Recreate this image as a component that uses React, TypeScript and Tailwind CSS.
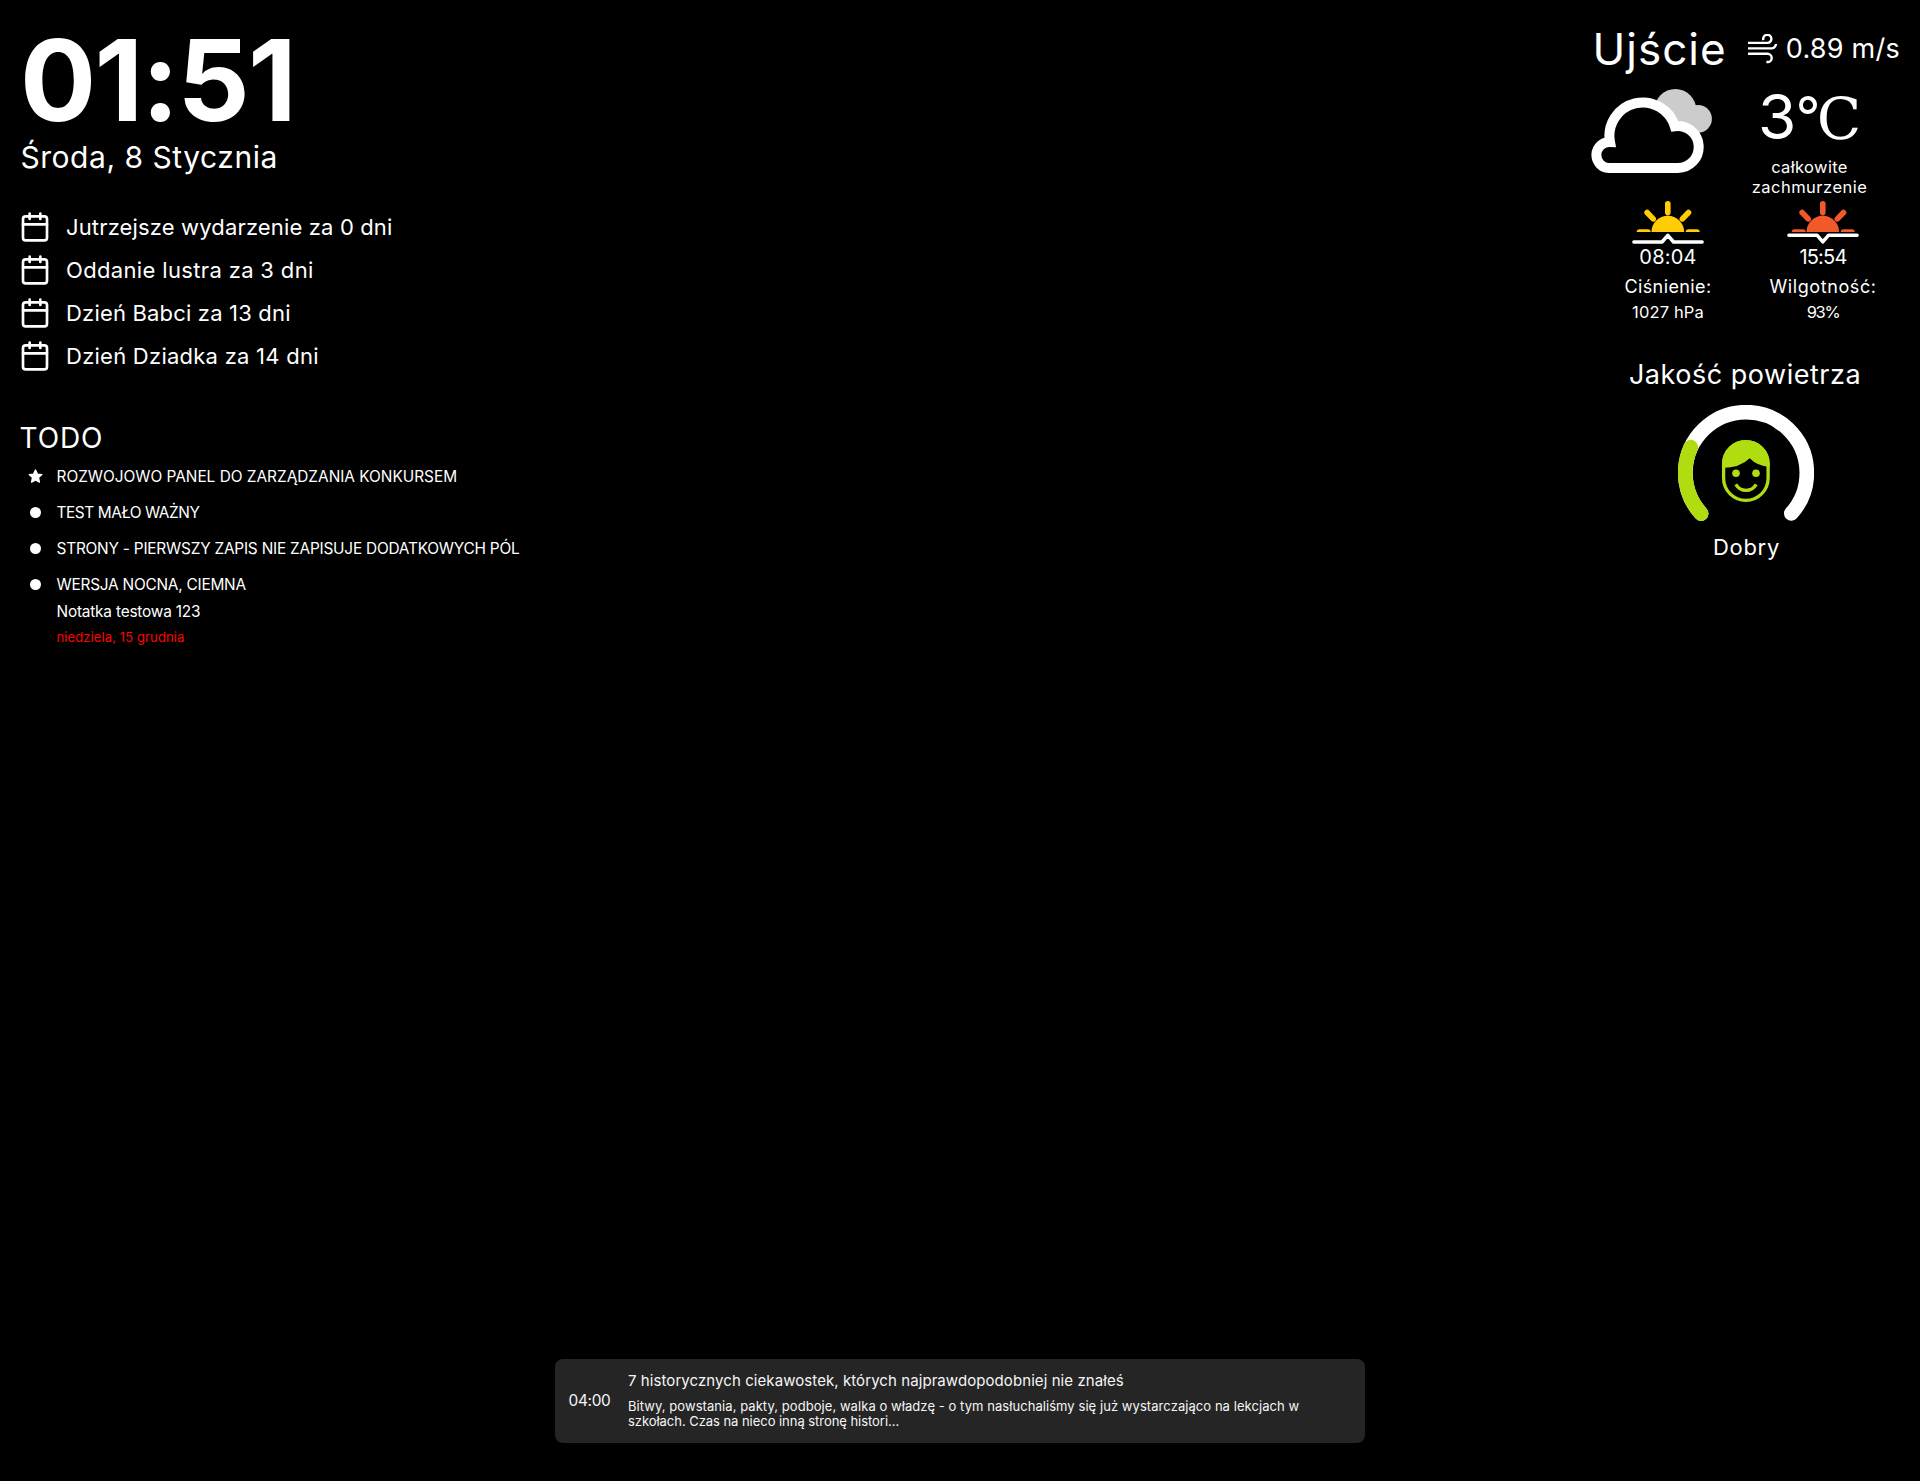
import type { ReactNode } from "react";

function CalendarIcon() {
  return (
    <svg
      className="h-8 w-8 shrink-0"
      viewBox="0 0 24 24"
      fill="none"
      stroke="currentColor"
      strokeWidth="2"
      strokeLinecap="round"
      strokeLinejoin="round"
    >
      <rect x="3" y="4" width="18" height="18" rx="2" />
      <path d="M16 2v4M8 2v4M3 10h18" />
    </svg>
  );
}

function StarIcon() {
  return (
    <svg className="-ml-[1.5px] h-[15px] w-[15px]" viewBox="0 0 15 15" fill="#fff">
      <path
        d="M7.5 1l1.9 4.1 4.4.5-3.3 3 .9 4.5-3.9-2.2-3.9 2.2.9-4.5-3.3-3 4.4-.5z"
        stroke="#fff"
        strokeWidth="1.4"
        strokeLinejoin="round"
      />
    </svg>
  );
}

function WindIcon() {
  return (
    <svg
      className="mt-3 h-[30px] w-[30px] shrink-0"
      viewBox="0 0 30 30"
      fill="none"
      stroke="#fff"
      strokeWidth="2.4"
    >
      <path d="M0 8.9H19.8A4.1 4.1 0 1 0 15.4 6.2" />
      <path d="M0 14.4H23A4.6 4.6 0 0 0 28 10" />
      <path d="M0 19.8H19.6A4.1 4.1 0 0 1 19.6 28H18.4" />
    </svg>
  );
}

function CloudIcon() {
  return (
    <svg className="mt-[13px] ml-px h-[84px] w-[121px] shrink-0" viewBox="0 0 121 84">
      <g fill="#ccc">
        <circle cx="84.3" cy="21" r="21" />
        <circle cx="107" cy="29.8" r="13.9" />
        <path d="M84 21L104.7 16L107 43H84z" />
      </g>
      <path
        d="M19 53A33.4 33.4 0 0 1 83.8 37.2A21 21 0 1 1 86.5 79H17.8A13 13 0 1 1 19 53z"
        fill="#000"
        stroke="#fff"
        strokeWidth="10"
      />
    </svg>
  );
}

function SunIcon({ id, color, horizon }: { id: string; color: string; horizon: string }) {
  return (
    <svg className="h-[43px] w-[72px]" viewBox="0 0 72 43" fill="none" strokeLinecap="round">
      <clipPath id={id}>
        <path d="M0 0H72V31H0z" />
      </clipPath>
      <g clipPath={`url(#${id})`} stroke={color} strokeWidth="5.6">
        <circle cx="35.8" cy="31" r="16.3" fill={color} stroke="none" />
        <path d="M35.8 2.8V11.6M15.1 11.5L21.2 17.9M56.5 11.5L50.4 17.9M7.5 31H15.9M56.5 31H64.9" />
      </g>
      <path d={horizon} stroke="#fff" strokeWidth="3.5" strokeLinejoin="round" />
    </svg>
  );
}

function AirGauge() {
  return (
    <svg className="mt-[15px] ml-0.5 h-[120px] w-[136px]" viewBox="0 0 136 120" fill="none">
      <g strokeWidth="14.7" strokeLinecap="round">
        <path d="M23.1 108.6A60.7 60.7 0 1 1 113.3 108.4" stroke="#fff" />
        <path d="M23.1 108.6A60.7 60.7 0 0 1 12.8 42.2" stroke="#b0dd10" />
      </g>
      <rect x="45.6" y="36.7" width="44.5" height="58.7" rx="22.2" stroke="#b0dd10" strokeWidth="3.3" />
      <path d="M44 63V58.8A23.85 23.85 0 0 1 91.7 58.8V62Q79 61 71.7 53.3Q62 63 44 63z" fill="#b0dd10" />
      <circle cx="58" cy="68.3" r="3.8" fill="#b0dd10" />
      <circle cx="78" cy="68.3" r="3.8" fill="#b0dd10" />
      <path d="M57.8 79.3C60 83 63.5 85.3 68 85.3S76 83 78.2 79.3" stroke="#b0dd10" strokeWidth="3.3" />
    </svg>
  );
}

function EventRow({ children }: { children: ReactNode }) {
  return (
    <li className="flex h-[43px] items-center gap-[15px]">
      <CalendarIcon />
      <span className="mt-0.5">{children}</span>
    </li>
  );
}

function TodoItem({ starred, children }: { starred?: boolean; children: ReactNode }) {
  return (
    <li className="flex">
      <span className="flex h-[21px] w-[27.5px] shrink-0 items-center">
        {starred ? <StarIcon /> : <span className="ml-[0.5px] h-[11px] w-[11px] rounded-full bg-white" />}
      </span>
      <div className="text-[15.4px] leading-[21px]">{children}</div>
    </li>
  );
}

export default function App() {
  return (
    <div className="flex h-[1481px] w-full flex-col overflow-hidden bg-black font-['Inter',sans-serif] whitespace-nowrap text-white">
      <div className="flex justify-between pr-5">
        <section className="pt-6">
          <div className="pl-5 text-[113px] leading-[112px] font-bold tracking-[-1.72px]">01:51</div>
          <div className="mt-px pl-[20.5px] text-[30px] leading-[40px] tracking-[0.53px]">Środa, 8 Stycznia</div>

          <ul className="mt-7 pl-[19px] text-[22px]">
            <EventRow>
              <span className="tracking-[0.147px]">Jutrzejsze wydarzenie za 0 dni</span>
            </EventRow>
            <EventRow>
              <span className="tracking-[0.347px]">Oddanie lustra za 3 dni</span>
            </EventRow>
            <EventRow>
              <span className="tracking-[0.18px]">Dzień Babci za 13 dni</span>
            </EventRow>
            <EventRow>
              <span className="tracking-[0.25px]">Dzień Dziadka za 14 dni</span>
            </EventRow>
          </ul>

          <h2 className="mt-[43px] pl-[19.5px] text-[28px] leading-9 tracking-[0.9px]">TODO</h2>
          <ul className="mt-2.5 flex flex-col gap-[15px] pl-[29px]">
            <TodoItem starred>
              <p className="tracking-[-0.01px]">ROZWOJOWO PANEL DO ZARZĄDZANIA KONKURSEM</p>
            </TodoItem>
            <TodoItem>
              <p className="tracking-[-0.42px]">TEST MAŁO WAŻNY</p>
            </TodoItem>
            <TodoItem>
              <p className="tracking-[-0.217px]">STRONY - PIERWSZY ZAPIS NIE ZAPISUJE DODATKOWYCH PÓL</p>
            </TodoItem>
            <TodoItem>
              <p className="tracking-[-0.23px]">WERSJA NOCNA, CIEMNA</p>
              <p className="mt-[7px] leading-5 tracking-[-0.198px]">Notatka testowa 123</p>
              <p className="mt-1.5 text-[13px] leading-[19px] tracking-[0.109px] text-[#f00]">niedziela, 15 grudnia</p>
            </TodoItem>
          </ul>
        </section>

        <section className="w-[310px] pt-[22px]">
          <div className="flex h-[54px] items-start">
            <h2 className="w-[158.5px] pl-[2.5px] text-[44px] leading-[54px] tracking-[1.02px]">Ujście</h2>
            <WindIcon />
            <span className="ml-2 text-[27px] leading-[54px] tracking-[0.25px]">0.89 m/s</span>
          </div>

          <div className="flex items-start">
            <CloudIcon />
            <div className="ml-[7px] flex w-[181px] flex-col items-center">
              <div className="h-[81px] text-[62px] leading-[82px]">
                3<span className="font-['DejaVu_Serif'] text-[58px] leading-none">℃</span>
              </div>
              <p className="text-center text-[16.5px] leading-5">
                <span className="tracking-[0.35px]">całkowite</span>
                <br />
                <span className="tracking-[0.49px]">zachmurzenie</span>
              </p>
            </div>
          </div>

          <div className="mt-1 flex text-center">
            <div className="flex w-[156px] flex-col items-center">
              <SunIcon id="sunrise" color="#ffcc05" horizon="M1.9 41H30L35.8 34.3L41.6 41H70.1" />
              <span className="mt-[3px] text-xl leading-5 tracking-[0.2px]">08:04</span>
              <span className="mt-[7px] text-lg leading-[25px] tracking-[0.4px]">Ciśnienie:</span>
              <span className="mt-[3px] text-[16.5px] leading-5 tracking-[0.149px]">1027 hPa</span>
            </div>
            <div className="flex w-[154px] flex-col items-center">
              <SunIcon id="sunset" color="#f1592a" horizon="M1.9 34.2H30L35.8 40.9L41.6 34.2H70.1" />
              <span className="mt-[3px] text-xl leading-5 tracking-[-0.8px]">15:54</span>
              <span className="mt-[7px] text-lg leading-[25px] tracking-[0.6px]">Wilgotność:</span>
              <span className="mt-[3px] text-[16.5px] leading-5 tracking-[-1.3px]">93%</span>
            </div>
          </div>

          <div className="mt-[38px] flex flex-col items-center">
            <h3 className="text-[27px] leading-[30px] tracking-[0.516px]">Jakość powietrza</h3>
            <AirGauge />
            <span className="mt-[7px] ml-[3px] text-[22px] leading-[30px] tracking-[0.7px]">Dobry</span>
          </div>
        </section>
      </div>

      <article className="mx-auto mt-auto mb-[38px] flex h-[84px] w-[810px] rounded-lg bg-[#252525] text-[#f5f5f5]">
        <time className="w-[73px] pl-[13.5px] text-[15.4px] leading-[84px] tracking-[-0.32px]">04:00</time>
        <div className="pt-3">
          <h4 className="text-[15px] leading-[19px] tracking-[0.076px]">
            7 historycznych ciekawostek, których najprawdopodobniej nie znałeś
          </h4>
          <p className="mt-[9px] text-[13px] leading-[15px]">
            <span className="tracking-[0.062px]">
              Bitwy, powstania, pakty, podboje, walka o władzę - o tym nasłuchaliśmy się już wystarczająco na lekcjach w
            </span>
            <br />
            <span className="tracking-[-0.044px]">szkołach. Czas na nieco inną stronę histori…</span>
          </p>
        </div>
      </article>
    </div>
  );
}
